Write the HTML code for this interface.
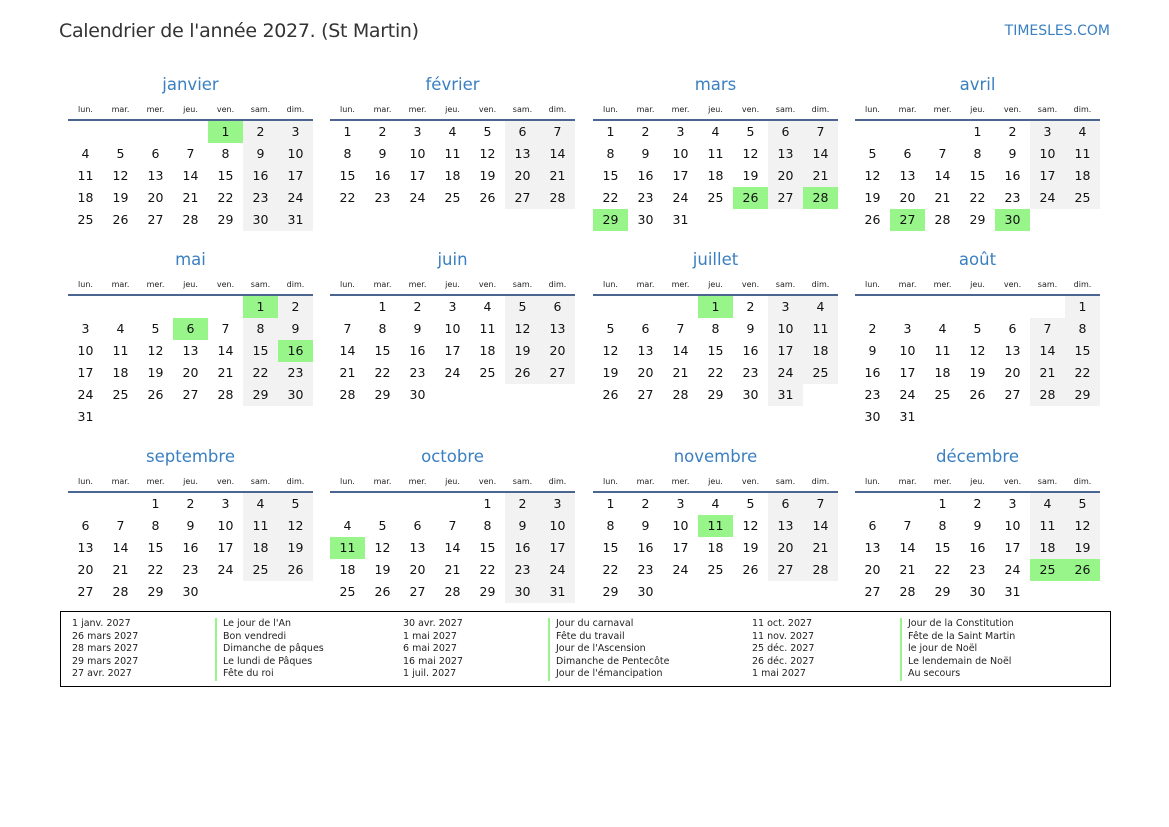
<!DOCTYPE html>
<html><head><meta charset="utf-8"><style>
*{margin:0;padding:0;box-sizing:border-box}
body{width:1169px;height:827px;background:#fff;font-family:"DejaVu Sans","Liberation Sans",sans-serif;color:#111;position:relative;overflow:hidden}
.t{position:absolute;left:59px;top:20px;font-size:19px;color:#333;letter-spacing:-0.3px}
.s{position:absolute;right:59px;top:23px;font-size:14px;color:#3a7fc1}
.m{position:absolute;width:245px}
.m h2{font-weight:normal;font-size:16.5px;color:#3a7fc1;text-align:center;height:24px;line-height:24px}
.hd{display:grid;grid-template-columns:repeat(7,35px);font-size:8px;color:#222;text-align:center;height:24px;line-height:26px;border-bottom:2px solid #4a6590}
.g{display:grid;grid-template-columns:repeat(7,35px);grid-auto-rows:22px;font-size:12.5px;text-align:center;line-height:22px}
.g b{font-weight:normal}
.g .w{background:#f2f2f2}
.g .h{background:#98f58a}
.lg{position:absolute;left:60px;top:611px;width:1051px;height:76px;border:1px solid #000;font-size:9.5px;color:#222}
.c{position:absolute;top:6px;line-height:12.5px}
.b{border-left:2px solid #98f58a;padding-left:6px}
</style></head><body>
<div class="t">Calendrier de l'année 2027. (St Martin)</div>
<div class="s">TIMESLES.COM</div>

<div class="m" style="left:68px;top:73px"><h2>janvier</h2><div class="hd"><span>lun.</span><span>mar.</span><span>mer.</span><span>jeu.</span><span>ven.</span><span>sam.</span><span>dim.</span></div><div class="g">
<i></i><i></i><i></i><i></i><b class="h">1</b><b class="w">2</b><b class="w">3</b>
<b>4</b><b>5</b><b>6</b><b>7</b><b>8</b><b class="w">9</b><b class="w">10</b>
<b>11</b><b>12</b><b>13</b><b>14</b><b>15</b><b class="w">16</b><b class="w">17</b>
<b>18</b><b>19</b><b>20</b><b>21</b><b>22</b><b class="w">23</b><b class="w">24</b>
<b>25</b><b>26</b><b>27</b><b>28</b><b>29</b><b class="w">30</b><b class="w">31</b>
</div></div>

<div class="m" style="left:330px;top:73px"><h2>février</h2><div class="hd"><span>lun.</span><span>mar.</span><span>mer.</span><span>jeu.</span><span>ven.</span><span>sam.</span><span>dim.</span></div><div class="g">
<b>1</b><b>2</b><b>3</b><b>4</b><b>5</b><b class="w">6</b><b class="w">7</b>
<b>8</b><b>9</b><b>10</b><b>11</b><b>12</b><b class="w">13</b><b class="w">14</b>
<b>15</b><b>16</b><b>17</b><b>18</b><b>19</b><b class="w">20</b><b class="w">21</b>
<b>22</b><b>23</b><b>24</b><b>25</b><b>26</b><b class="w">27</b><b class="w">28</b>
</div></div>

<div class="m" style="left:593px;top:73px"><h2>mars</h2><div class="hd"><span>lun.</span><span>mar.</span><span>mer.</span><span>jeu.</span><span>ven.</span><span>sam.</span><span>dim.</span></div><div class="g">
<b>1</b><b>2</b><b>3</b><b>4</b><b>5</b><b class="w">6</b><b class="w">7</b>
<b>8</b><b>9</b><b>10</b><b>11</b><b>12</b><b class="w">13</b><b class="w">14</b>
<b>15</b><b>16</b><b>17</b><b>18</b><b>19</b><b class="w">20</b><b class="w">21</b>
<b>22</b><b>23</b><b>24</b><b>25</b><b class="h">26</b><b class="w">27</b><b class="h">28</b>
<b class="h">29</b><b>30</b><b>31</b>
</div></div>

<div class="m" style="left:855px;top:73px"><h2>avril</h2><div class="hd"><span>lun.</span><span>mar.</span><span>mer.</span><span>jeu.</span><span>ven.</span><span>sam.</span><span>dim.</span></div><div class="g">
<i></i><i></i><i></i><b>1</b><b>2</b><b class="w">3</b><b class="w">4</b>
<b>5</b><b>6</b><b>7</b><b>8</b><b>9</b><b class="w">10</b><b class="w">11</b>
<b>12</b><b>13</b><b>14</b><b>15</b><b>16</b><b class="w">17</b><b class="w">18</b>
<b>19</b><b>20</b><b>21</b><b>22</b><b>23</b><b class="w">24</b><b class="w">25</b>
<b>26</b><b class="h">27</b><b>28</b><b>29</b><b class="h">30</b>
</div></div>

<div class="m" style="left:68px;top:248px"><h2>mai</h2><div class="hd"><span>lun.</span><span>mar.</span><span>mer.</span><span>jeu.</span><span>ven.</span><span>sam.</span><span>dim.</span></div><div class="g">
<i></i><i></i><i></i><i></i><i></i><b class="h">1</b><b class="w">2</b>
<b>3</b><b>4</b><b>5</b><b class="h">6</b><b>7</b><b class="w">8</b><b class="w">9</b>
<b>10</b><b>11</b><b>12</b><b>13</b><b>14</b><b class="w">15</b><b class="h">16</b>
<b>17</b><b>18</b><b>19</b><b>20</b><b>21</b><b class="w">22</b><b class="w">23</b>
<b>24</b><b>25</b><b>26</b><b>27</b><b>28</b><b class="w">29</b><b class="w">30</b>
<b>31</b>
</div></div>

<div class="m" style="left:330px;top:248px"><h2>juin</h2><div class="hd"><span>lun.</span><span>mar.</span><span>mer.</span><span>jeu.</span><span>ven.</span><span>sam.</span><span>dim.</span></div><div class="g">
<i></i><b>1</b><b>2</b><b>3</b><b>4</b><b class="w">5</b><b class="w">6</b>
<b>7</b><b>8</b><b>9</b><b>10</b><b>11</b><b class="w">12</b><b class="w">13</b>
<b>14</b><b>15</b><b>16</b><b>17</b><b>18</b><b class="w">19</b><b class="w">20</b>
<b>21</b><b>22</b><b>23</b><b>24</b><b>25</b><b class="w">26</b><b class="w">27</b>
<b>28</b><b>29</b><b>30</b>
</div></div>

<div class="m" style="left:593px;top:248px"><h2>juillet</h2><div class="hd"><span>lun.</span><span>mar.</span><span>mer.</span><span>jeu.</span><span>ven.</span><span>sam.</span><span>dim.</span></div><div class="g">
<i></i><i></i><i></i><b class="h">1</b><b>2</b><b class="w">3</b><b class="w">4</b>
<b>5</b><b>6</b><b>7</b><b>8</b><b>9</b><b class="w">10</b><b class="w">11</b>
<b>12</b><b>13</b><b>14</b><b>15</b><b>16</b><b class="w">17</b><b class="w">18</b>
<b>19</b><b>20</b><b>21</b><b>22</b><b>23</b><b class="w">24</b><b class="w">25</b>
<b>26</b><b>27</b><b>28</b><b>29</b><b>30</b><b class="w">31</b>
</div></div>

<div class="m" style="left:855px;top:248px"><h2>août</h2><div class="hd"><span>lun.</span><span>mar.</span><span>mer.</span><span>jeu.</span><span>ven.</span><span>sam.</span><span>dim.</span></div><div class="g">
<i></i><i></i><i></i><i></i><i></i><i></i><b class="w">1</b>
<b>2</b><b>3</b><b>4</b><b>5</b><b>6</b><b class="w">7</b><b class="w">8</b>
<b>9</b><b>10</b><b>11</b><b>12</b><b>13</b><b class="w">14</b><b class="w">15</b>
<b>16</b><b>17</b><b>18</b><b>19</b><b>20</b><b class="w">21</b><b class="w">22</b>
<b>23</b><b>24</b><b>25</b><b>26</b><b>27</b><b class="w">28</b><b class="w">29</b>
<b>30</b><b>31</b>
</div></div>

<div class="m" style="left:68px;top:445px"><h2>septembre</h2><div class="hd"><span>lun.</span><span>mar.</span><span>mer.</span><span>jeu.</span><span>ven.</span><span>sam.</span><span>dim.</span></div><div class="g">
<i></i><i></i><b>1</b><b>2</b><b>3</b><b class="w">4</b><b class="w">5</b>
<b>6</b><b>7</b><b>8</b><b>9</b><b>10</b><b class="w">11</b><b class="w">12</b>
<b>13</b><b>14</b><b>15</b><b>16</b><b>17</b><b class="w">18</b><b class="w">19</b>
<b>20</b><b>21</b><b>22</b><b>23</b><b>24</b><b class="w">25</b><b class="w">26</b>
<b>27</b><b>28</b><b>29</b><b>30</b>
</div></div>

<div class="m" style="left:330px;top:445px"><h2>octobre</h2><div class="hd"><span>lun.</span><span>mar.</span><span>mer.</span><span>jeu.</span><span>ven.</span><span>sam.</span><span>dim.</span></div><div class="g">
<i></i><i></i><i></i><i></i><b>1</b><b class="w">2</b><b class="w">3</b>
<b>4</b><b>5</b><b>6</b><b>7</b><b>8</b><b class="w">9</b><b class="w">10</b>
<b class="h">11</b><b>12</b><b>13</b><b>14</b><b>15</b><b class="w">16</b><b class="w">17</b>
<b>18</b><b>19</b><b>20</b><b>21</b><b>22</b><b class="w">23</b><b class="w">24</b>
<b>25</b><b>26</b><b>27</b><b>28</b><b>29</b><b class="w">30</b><b class="w">31</b>
</div></div>

<div class="m" style="left:593px;top:445px"><h2>novembre</h2><div class="hd"><span>lun.</span><span>mar.</span><span>mer.</span><span>jeu.</span><span>ven.</span><span>sam.</span><span>dim.</span></div><div class="g">
<b>1</b><b>2</b><b>3</b><b>4</b><b>5</b><b class="w">6</b><b class="w">7</b>
<b>8</b><b>9</b><b>10</b><b class="h">11</b><b>12</b><b class="w">13</b><b class="w">14</b>
<b>15</b><b>16</b><b>17</b><b>18</b><b>19</b><b class="w">20</b><b class="w">21</b>
<b>22</b><b>23</b><b>24</b><b>25</b><b>26</b><b class="w">27</b><b class="w">28</b>
<b>29</b><b>30</b>
</div></div>

<div class="m" style="left:855px;top:445px"><h2>décembre</h2><div class="hd"><span>lun.</span><span>mar.</span><span>mer.</span><span>jeu.</span><span>ven.</span><span>sam.</span><span>dim.</span></div><div class="g">
<i></i><i></i><b>1</b><b>2</b><b>3</b><b class="w">4</b><b class="w">5</b>
<b>6</b><b>7</b><b>8</b><b>9</b><b>10</b><b class="w">11</b><b class="w">12</b>
<b>13</b><b>14</b><b>15</b><b>16</b><b>17</b><b class="w">18</b><b class="w">19</b>
<b>20</b><b>21</b><b>22</b><b>23</b><b>24</b><b class="h">25</b><b class="h">26</b>
<b>27</b><b>28</b><b>29</b><b>30</b><b>31</b>
</div></div>

<div class="lg">
<div class="c" style="left:11px">1 janv. 2027<br>26 mars 2027<br>28 mars 2027<br>29 mars 2027<br>27 avr. 2027</div>
<div class="c b" style="left:154px">Le jour de l'An<br>Bon vendredi<br>Dimanche de pâques<br>Le lundi de Pâques<br>Fête du roi</div>
<div class="c" style="left:342px">30 avr. 2027<br>1 mai 2027<br>6 mai 2027<br>16 mai 2027<br>1 juil. 2027</div>
<div class="c b" style="left:487px">Jour du carnaval<br>Fête du travail<br>Jour de l'Ascension<br>Dimanche de Pentecôte<br>Jour de l'émancipation</div>
<div class="c" style="left:691px">11 oct. 2027<br>11 nov. 2027<br>25 déc. 2027<br>26 déc. 2027<br>1 mai 2027</div>
<div class="c b" style="left:839px">Jour de la Constitution<br>Fête de la Saint Martin<br>le jour de Noël<br>Le lendemain de Noël<br>Au secours</div>
</div>
</body></html>
